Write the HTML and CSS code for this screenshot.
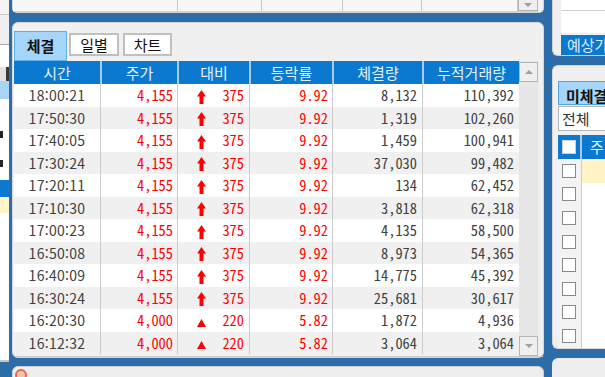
FILE: index.html
```html
<!DOCTYPE html>
<html lang="ko">
<head>
<meta charset="utf-8">
<title>체결</title>
<link rel="stylesheet" href="styles.css">
</head>
<body>
<div class="screen">
  <div class="left-strip">
    <div class="ls-a"></div>
    <div class="ls-b"></div>
    <div class="ls-c"></div>
    <div class="ls-d"></div>
    <div class="ls-e"></div>
    <div class="ls-f"></div>
    <div class="ls-mark"></div>
    <div class="ls-f2"></div>
    <div class="ls-mark"></div>
    <div class="ls-f3"></div>
    <div class="ls-blue"></div>
    <div class="ls-yellow"></div>
    <div class="ls-rest"></div>
  </div>

  <div class="center">
    <div class="top-panel">
      <div class="top-grid">
        <div class="tc w1"></div>
        <div class="tc w2"></div>
        <div class="tc w3"></div>
        <div class="tc w4"></div>
        <div class="tc w5"></div>
        <div class="top-scroll"><span class="tri-dn"></span></div>
      </div>
    </div>

    <div class="main-panel">
      <div class="tabs">
        <div class="tab active">체결</div>
        <div class="tab t2">일별</div>
        <div class="tab t3">차트</div>
      </div>
      <div class="grid-wrap">
        <div class="grid">
          <div class="row head">
            <div class="hc">시간</div>
            <div class="hc">주가</div>
            <div class="hc">대비</div>
            <div class="hc">등락률</div>
            <div class="hc">체결량</div>
            <div class="hc">누적거래량</div>
          </div>
          <div class="row"><div class="c time">18:00:21</div><div class="c r red">4,155</div><div class="c diff red"><svg class="arr" viewBox="0 0 9 14"><path d="M4.5 0L9 6.5H6.5V14H2.5V6.5H0Z"/></svg><span>375</span></div><div class="c r red">9.92</div><div class="c r">8,132</div><div class="c r">110,392</div></div>
          <div class="row"><div class="c time">17:50:30</div><div class="c r red">4,155</div><div class="c diff red"><svg class="arr" viewBox="0 0 9 14"><path d="M4.5 0L9 6.5H6.5V14H2.5V6.5H0Z"/></svg><span>375</span></div><div class="c r red">9.92</div><div class="c r">1,319</div><div class="c r">102,260</div></div>
          <div class="row"><div class="c time">17:40:05</div><div class="c r red">4,155</div><div class="c diff red"><svg class="arr" viewBox="0 0 9 14"><path d="M4.5 0L9 6.5H6.5V14H2.5V6.5H0Z"/></svg><span>375</span></div><div class="c r red">9.92</div><div class="c r">1,459</div><div class="c r">100,941</div></div>
          <div class="row"><div class="c time">17:30:24</div><div class="c r red">4,155</div><div class="c diff red"><svg class="arr" viewBox="0 0 9 14"><path d="M4.5 0L9 6.5H6.5V14H2.5V6.5H0Z"/></svg><span>375</span></div><div class="c r red">9.92</div><div class="c r">37,030</div><div class="c r">99,482</div></div>
          <div class="row"><div class="c time">17:20:11</div><div class="c r red">4,155</div><div class="c diff red"><svg class="arr" viewBox="0 0 9 14"><path d="M4.5 0L9 6.5H6.5V14H2.5V6.5H0Z"/></svg><span>375</span></div><div class="c r red">9.92</div><div class="c r">134</div><div class="c r">62,452</div></div>
          <div class="row"><div class="c time">17:10:30</div><div class="c r red">4,155</div><div class="c diff red"><svg class="arr" viewBox="0 0 9 14"><path d="M4.5 0L9 6.5H6.5V14H2.5V6.5H0Z"/></svg><span>375</span></div><div class="c r red">9.92</div><div class="c r">3,818</div><div class="c r">62,318</div></div>
          <div class="row"><div class="c time">17:00:23</div><div class="c r red">4,155</div><div class="c diff red"><svg class="arr" viewBox="0 0 9 14"><path d="M4.5 0L9 6.5H6.5V14H2.5V6.5H0Z"/></svg><span>375</span></div><div class="c r red">9.92</div><div class="c r">4,135</div><div class="c r">58,500</div></div>
          <div class="row"><div class="c time">16:50:08</div><div class="c r red">4,155</div><div class="c diff red"><svg class="arr" viewBox="0 0 9 14"><path d="M4.5 0L9 6.5H6.5V14H2.5V6.5H0Z"/></svg><span>375</span></div><div class="c r red">9.92</div><div class="c r">8,973</div><div class="c r">54,365</div></div>
          <div class="row"><div class="c time">16:40:09</div><div class="c r red">4,155</div><div class="c diff red"><svg class="arr" viewBox="0 0 9 14"><path d="M4.5 0L9 6.5H6.5V14H2.5V6.5H0Z"/></svg><span>375</span></div><div class="c r red">9.92</div><div class="c r">14,775</div><div class="c r">45,392</div></div>
          <div class="row"><div class="c time">16:30:24</div><div class="c r red">4,155</div><div class="c diff red"><svg class="arr" viewBox="0 0 9 14"><path d="M4.5 0L9 6.5H6.5V14H2.5V6.5H0Z"/></svg><span>375</span></div><div class="c r red">9.92</div><div class="c r">25,681</div><div class="c r">30,617</div></div>
          <div class="row"><div class="c time">16:20:30</div><div class="c r red">4,000</div><div class="c diff red"><svg class="tri" viewBox="0 0 9 8"><path d="M4.5 0L9 8H0Z"/></svg><span>220</span></div><div class="c r red">5.82</div><div class="c r">1,872</div><div class="c r">4,936</div></div>
          <div class="row"><div class="c time">16:12:32</div><div class="c r red">4,000</div><div class="c diff red"><svg class="tri" viewBox="0 0 9 8"><path d="M4.5 0L9 8H0Z"/></svg><span>220</span></div><div class="c r red">5.82</div><div class="c r">3,064</div><div class="c r">3,064</div></div>
        </div>
        <div class="vscroll">
          <div class="sbtn"><span class="tri-up"></span></div>
          <div class="track"></div>
          <div class="sbtn"><span class="tri-dn"></span></div>
        </div>
      </div>
    </div>

    <div class="bottom-panel"><span class="ring"></span></div>
  </div>

  <div class="right">
    <div class="rt-panel">
      <div class="rt-white"><div class="rt-line"></div></div>
      <div class="rt-label">예상가</div>
    </div>
    <div class="rb-panel">
      <div class="r-tab">미체결</div>
      <div class="combo">전체</div>
      <div class="r-head">
        <div class="cbcol"><span class="cb head-cb"></span></div>
        <div class="r-head-txt">주</div>
      </div>
      <div class="r-row first"><div class="cbcol"><span class="cb"></span></div><div class="rc"></div></div>
      <div class="r-row"><div class="cbcol"><span class="cb"></span></div><div class="rc"></div></div>
      <div class="r-row"><div class="cbcol"><span class="cb"></span></div><div class="rc"></div></div>
      <div class="r-row"><div class="cbcol"><span class="cb"></span></div><div class="rc"></div></div>
      <div class="r-row"><div class="cbcol"><span class="cb"></span></div><div class="rc"></div></div>
      <div class="r-row"><div class="cbcol"><span class="cb"></span></div><div class="rc"></div></div>
      <div class="r-row"><div class="cbcol"><span class="cb"></span></div><div class="rc"></div></div>
      <div class="r-row"><div class="cbcol"><span class="cb"></span></div><div class="rc"></div></div>
    </div>
    <div class="rbot-panel"></div>
  </div>
</div>
</body>
</html>
```

FILE: styles.css
```css
html, body {
  margin: 0;
  padding: 0;
}
body {
  background: #2e6ea8;
  width: 605px;
  height: 377px;
  overflow: hidden;
  font-family: "Noto Sans CJK KR", "Noto Sans", sans-serif;
  color: #3c3c3c;
}
.screen {
  display: flex;
  height: 377px;
}

/* left strip */
.left-strip {
  width: 9px;
  flex: none;
  height: 362px;
  display: flex;
  flex-direction: column;
  background: #ffffff;
}
.ls-a { height: 14px; background: #f4f4f4; border-bottom: 1px solid #c8c8c8; }
.ls-b { height: 29px; background: #f0f0f0; border-bottom: 1px solid #a8a8a8; }
.ls-c { height: 22px; background: #ffffff; }
.ls-d { height: 14px; background: #e2e2e2; border-right: 3px solid #3a3a3a; }
.ls-e { height: 18px; background: #a8d4f5; }
.ls-f { height: 32px; background: #ffffff; }
.ls-mark { height: 7px; width: 3px; background: #222222; }
.ls-f2 { height: 22px; background: #ffffff; }
.ls-f3 { height: 13px; background: #ffffff; }
.ls-blue { height: 17px; background: #0a79cf; }
.ls-yellow { height: 16px; background: #fff5c8; }
.ls-rest { flex: 1; background: #ffffff; border-bottom: 2px solid #c8c8c8; }

/* center column */
.center {
  width: 532px;
  margin-left: 3px;
  flex: none;
  display: flex;
  flex-direction: column;
}
.top-panel {
  height: 15px;
  box-sizing: border-box;
  background: #f2f2f2;
  border: 1px solid #d4d4d4;
  border-top: none;
  border-radius: 0 0 5px 5px;
}
.top-grid {
  display: flex;
  height: 12px;
  border-bottom: 1px solid #cfcfcf;
  box-sizing: border-box;
  margin-right: 5px;
}
.tc {
  background: #f7f7f7;
  border-right: 1px solid #c6c6c6;
  box-sizing: border-box;
}
.w1 { width: 165px; }
.w2 { width: 84px; }
.w3 { width: 81px; }
.w4 { width: 79px; }
.w5 { width: 96px; }
.top-scroll {
  width: 20px;
  box-sizing: border-box;
  border: 1px solid #b5b5b5;
  border-top: none;
  background: #efefef;
  display: flex;
  align-items: center;
  justify-content: center;
}

.main-panel {
  margin-top: 9px;
  height: 338px;
  box-sizing: border-box;
  background: #f0f0f0;
  border: 1px solid #d8d8d8;
  border-radius: 6px;
  padding: 8px 0 0 1px;
}
.tabs {
  display: flex;
  align-items: flex-start;
  height: 30px;
}
.tab {
  box-sizing: border-box;
  height: 23px;
  margin-top: 2px;
  width: 49px;
  background: #ffffff;
  border: 2px solid #c0c0c0;
  font-size: 15px;
  line-height: 19px;
  text-align: center;
  color: #111111;
}
.tab.active {
  width: 53px;
  height: 30px;
  margin-top: 0;
  background: #a5d5f8;
  border: 1px solid #62b0ea;
  font-weight: 700;
  line-height: 27px;
}
.tab.t2 { margin-left: 2px; width: 50px; }
.tab.t3 { margin-left: 4px; }

.grid-wrap {
  display: flex;
  height: 295px;
  border-bottom: 1px solid #c8c8c8;
}
.grid {
  width: 505px;
  flex: none;
  display: flex;
  flex-direction: column;
}
.row {
  display: grid;
  grid-template-columns: 86px 77px 72px 83px 90px 97px;
  height: 22.5px;
  background: #ffffff;
}
.row:nth-child(odd) {
  background: #f0f0f0;
}
.row.head {
  height: 23px;
  background: #0a79cf;
}
.hc {
  color: #e4f1fc;
  font-size: 15px;
  line-height: 23px;
  text-align: center;
  box-sizing: border-box;
}
.hc + .hc {
  border-left: 2px solid #a9cbe9;
}
.c {
  box-sizing: border-box;
  font-family: "Noto Sans CJK KR", sans-serif;
  font-feature-settings: "hwid" 1;
  font-size: 14.4px;
  line-height: 22px;
  color: #404040;
  white-space: nowrap;
}
.c + .c {
  border-left: 1px solid #cccccc;
}
.c.time {
  text-align: center;
  font-feature-settings: "tnum" 1;
  font-size: 14px;
  letter-spacing: 0.3px;
}
.r {
  text-align: right;
  padding-right: 4px;
}
.row .c:nth-child(5),
.row .c:nth-child(6) {
  padding-right: 5px;
}
.red {
  color: #ff0000;
}
.diff {
  display: flex;
  align-items: center;
  justify-content: space-between;
  padding: 0 5px 0 19px;
}
.arr {
  width: 9px;
  height: 14px;
  fill: #ff0000;
  margin-top: 3px;
}
.tri {
  width: 9px;
  height: 8px;
  fill: #ff0000;
  margin-top: 5px;
}

.vscroll {
  width: 19px;
  flex: none;
  display: flex;
  flex-direction: column;
  background: #e6e6e6;
  padding-top: 1px;
  box-sizing: border-box;
}
.sbtn {
  height: 20px;
  box-sizing: border-box;
  border: 1px solid #b6b6b6;
  background: #efefef;
  display: flex;
  align-items: center;
  justify-content: center;
}
.track {
  flex: 1;
}
.tri-up {
  width: 0;
  height: 0;
  border-left: 4px solid transparent;
  border-right: 4px solid transparent;
  border-bottom: 4px solid #a0a0a0;
}
.tri-dn {
  width: 0;
  height: 0;
  border-left: 4px solid transparent;
  border-right: 4px solid transparent;
  border-top: 4px solid #a0a0a0;
}

.bottom-panel {
  margin-top: 8px;
  height: 20px;
  box-sizing: border-box;
  background: #eeeeee;
  border: 1px solid #d0d0d0;
  border-radius: 6px 6px 0 0;
  padding: 2px 0 0 2px;
}
.ring {
  display: block;
  width: 12px;
  height: 12px;
  box-sizing: border-box;
  border-radius: 50%;
  border: 2px solid #e8684c;
  background: #f6c2b4;
}

/* right column */
.right {
  width: 60px;
  margin-left: 8px;
  flex: none;
  display: flex;
  flex-direction: column;
}
.rt-panel {
  height: 58px;
  box-sizing: border-box;
  background: #f0f0f0;
  border: 1px solid #d0d0d0;
  border-top: none;
  border-radius: 0 0 0 6px;
  padding-left: 8px;
}
.rt-white {
  height: 33px;
  background: #ffffff;
  box-sizing: border-box;
  padding-top: 10px;
}
.rt-line {
  border-top: 1px solid #cfcfcf;
}
.rt-label {
  margin-top: 2px;
  height: 20px;
  background: #0a79cf;
  color: #dcecfb;
  font-size: 15px;
  line-height: 20px;
  padding-left: 6px;
  white-space: nowrap;
  overflow: hidden;
}
.rb-panel {
  margin-top: 9px;
  height: 294px;
  box-sizing: border-box;
  background: #f0f0f0;
  border: 1px solid #d6d6d6;
  border-right: none;
  border-radius: 6px 0 0 6px;
  padding: 15px 0 0 5px;
  display: flex;
  flex-direction: column;
  overflow: hidden;
}
.r-tab {
  height: 30px;
  box-sizing: border-box;
  background: #a5d5f8;
  border: 1px solid #4fa5e6;
  border-right: none;
  font-size: 15px;
  font-weight: 700;
  color: #111111;
  line-height: 28px;
  padding-left: 7px;
  white-space: nowrap;
  overflow: hidden;
}
.combo {
  margin-top: 1px;
  height: 25px;
  box-sizing: border-box;
  background: #ffffff;
  border: 1px solid #b4b4b4;
  border-right: none;
  font-size: 15px;
  line-height: 23px;
  padding-left: 3px;
  color: #333333;
}
.r-head {
  margin-top: 4px;
  height: 24px;
  flex: none;
  display: flex;
  background: #0a79cf;
}
.cbcol {
  width: 24px;
  flex: none;
  box-sizing: border-box;
  display: flex;
  align-items: center;
  padding-left: 4px;
  border-right: 2px solid #a9cbe9;
}
.r-head-txt {
  color: #e4f1fc;
  font-size: 15px;
  line-height: 24px;
  padding-left: 8px;
}
.cb {
  display: block;
  width: 14px;
  height: 14px;
  box-sizing: border-box;
  background: #ffffff;
  border: 1px solid #8a8a8a;
}
.head-cb {
  border-color: #d0d0d0;
}
.r-row {
  height: 23.6px;
  flex: none;
  display: flex;
  background: #ffffff;
}
.r-row .cbcol {
  background: #f3f3f3;
  border-right: 1px solid #cccccc;
}
.rc {
  flex: 1;
}
.r-row.first .rc {
  background: #fff4c6;
}
.rbot-panel {
  margin-top: 9px;
  height: 20px;
  background: #eeeeee;
  border-radius: 6px 0 0 0;
}
```
